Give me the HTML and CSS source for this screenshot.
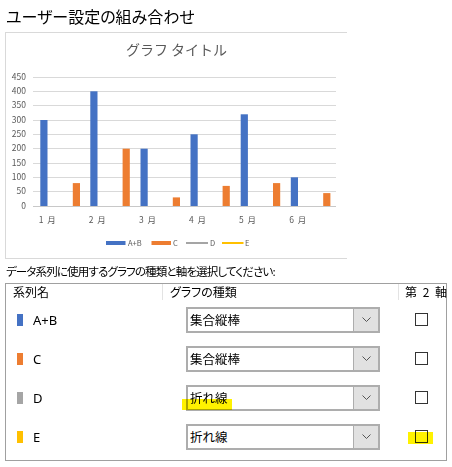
FILE: index.html
```html
<!DOCTYPE html>
<html lang="ja">

<head>
  <meta charset="UTF-8">
  <title>ユーザー設定の組み合わせ</title>
  <link rel="stylesheet" href="styles.css">
</head>

<body>

  <div class="page">
    <h1 class="page-title">ユーザー設定の組み合わせ</h1>

    <!-- Preview chart -->
    <div class="chart-box">
      <svg class="chart" width="341" height="225" viewBox="6 33 341 225">
        <text class="chart-title" x="176.5" y="55" text-anchor="middle">グラフ タイトル</text>

        <g class="grid">
          <line x1="33" x2="336" y1="77.5" y2="77.5"></line>
          <line x1="33" x2="336" y1="91.5" y2="91.5"></line>
          <line x1="33" x2="336" y1="105.5" y2="105.5"></line>
          <line x1="33" x2="336" y1="120.5" y2="120.5"></line>
          <line x1="33" x2="336" y1="134.5" y2="134.5"></line>
          <line x1="33" x2="336" y1="148.5" y2="148.5"></line>
          <line x1="33" x2="336" y1="163.5" y2="163.5"></line>
          <line x1="33" x2="336" y1="177.5" y2="177.5"></line>
          <line x1="33" x2="336" y1="191.5" y2="191.5"></line>
          <line class="axis" x1="33" x2="336" y1="206.5" y2="206.5"></line>
        </g>

        <g class="y-labels" text-anchor="end">
          <text x="26" y="80">450</text>
          <text x="26" y="94">400</text>
          <text x="26" y="108">350</text>
          <text x="26" y="123">300</text>
          <text x="26" y="137">250</text>
          <text x="26" y="151">200</text>
          <text x="26" y="166">150</text>
          <text x="26" y="180">100</text>
          <text x="26" y="194">50</text>
          <text x="26" y="209">0</text>
        </g>

        <!-- A+B -->
        <g class="bars-ab">
          <rect x="40.3" y="120" width="7.2" height="86"></rect>
          <rect x="90.3" y="91.3" width="7.2" height="114.7"></rect>
          <rect x="140.5" y="148.7" width="7.2" height="57.3"></rect>
          <rect x="190.5" y="134.3" width="7.2" height="71.7"></rect>
          <rect x="240.7" y="114.3" width="7.2" height="91.7"></rect>
          <rect x="290.8" y="177.3" width="7.2" height="28.7"></rect>
        </g>

        <!-- C -->
        <g class="bars-c">
          <rect x="72.8" y="183.1" width="7.2" height="22.9"></rect>
          <rect x="122.6" y="148.7" width="7.2" height="57.3"></rect>
          <rect x="172.8" y="197.4" width="7.2" height="8.6"></rect>
          <rect x="222.6" y="185.9" width="7.2" height="20.1"></rect>
          <rect x="273" y="183.1" width="7.2" height="22.9"></rect>
          <rect x="323.2" y="193.1" width="7.2" height="12.9"></rect>
        </g>

        <g class="x-labels" text-anchor="middle">
          <text x="47.8" y="223">1 月</text>
          <text x="97.8" y="223">2 月</text>
          <text x="148" y="223">3 月</text>
          <text x="198" y="223">4 月</text>
          <text x="248" y="223">5 月</text>
          <text x="298.2" y="223">6 月</text>
        </g>

        <g class="legend">
          <rect x="106" y="241" width="19.5" height="4" fill="#4472c4"></rect>
          <text x="128" y="246">A+B</text>
          <rect x="151.5" y="241" width="19.5" height="4" fill="#ed7d31"></rect>
          <text x="173" y="246">C</text>
          <line x1="186" x2="208" y1="243" y2="243" stroke="#a5a5a5" stroke-width="2"></line>
          <text x="210" y="246">D</text>
          <line x1="222" x2="243.5" y1="243" y2="243" stroke="#ffc000" stroke-width="2"></line>
          <text x="245" y="246">E</text>
        </g>
      </svg>
    </div>

    <p class="prompt">データ系列に使用するグラフの種類と軸を選択してください:</p>

    <!-- Series list -->
    <div class="series-table">
      <div class="series-head">
        <div class="head-cell">系列名</div>
        <div class="head-cell sep">グラフの種類</div>
        <div class="head-cell sep last">第 2 軸</div>
      </div>

      <div class="series-row">
        <div class="name-cell"><span class="swatch swatch-ab"></span>A+B</div>
        <div class="type-cell">
          <div class="combo">
            <span class="combo-text">集合縦棒</span>
            <span class="combo-btn"><svg width="9" height="5" viewBox="0 0 9 5"><path d="M0.5 0.5 L4.5 4.5 L8.5 0.5" /></svg></span>
          </div>
        </div>
        <div class="axis-cell"><span class="check"></span></div>
      </div>

      <div class="series-row">
        <div class="name-cell"><span class="swatch swatch-c"></span>C</div>
        <div class="type-cell">
          <div class="combo">
            <span class="combo-text">集合縦棒</span>
            <span class="combo-btn"><svg width="9" height="5" viewBox="0 0 9 5"><path d="M0.5 0.5 L4.5 4.5 L8.5 0.5" /></svg></span>
          </div>
        </div>
        <div class="axis-cell"><span class="check"></span></div>
      </div>

      <div class="series-row">
        <div class="name-cell"><span class="swatch swatch-d"></span>D</div>
        <div class="type-cell">
          <div class="combo">
            <span class="combo-text">折れ線</span>
            <span class="combo-btn"><svg width="9" height="5" viewBox="0 0 9 5"><path d="M0.5 0.5 L4.5 4.5 L8.5 0.5" /></svg></span>
            <span class="marker marker-type"></span>
          </div>
        </div>
        <div class="axis-cell"><span class="check"></span></div>
      </div>

      <div class="series-row">
        <div class="name-cell"><span class="swatch swatch-e"></span>E</div>
        <div class="type-cell">
          <div class="combo">
            <span class="combo-text">折れ線</span>
            <span class="combo-btn"><svg width="9" height="5" viewBox="0 0 9 5"><path d="M0.5 0.5 L4.5 4.5 L8.5 0.5" /></svg></span>
          </div>
        </div>
        <div class="axis-cell">
          <span class="check"><span class="marker marker-check"></span></span>
        </div>
      </div>
    </div>
  </div>

</body>

</html>
```

FILE: styles.css
```css
* {
  box-sizing: border-box;
}

body {
  margin: 0;
  background: #fff;
  color: #000;
  font-family: "Noto Sans", "Noto Sans CJK JP", sans-serif;
}

.page {
  width: 452px;
}

.page-title {
  margin: 0;
  padding-left: 6px;
  height: 32px;
  line-height: 32px;
  font-size: 16px;
  font-weight: normal;
  font-family: "Noto Sans CJK JP", sans-serif;
  font-feature-settings: "palt";
}

/* chart preview */

.chart-box {
  margin-left: 5px;
  width: 342px;
  height: 227px;
  border: 1px solid #d9d9d9;
  border-right: none;
}

.chart {
  display: block;
  font-family: "Noto Sans CJK JP", sans-serif;
}

.chart-title {
  font-size: 14px;
  fill: #595959;
}

.grid line {
  stroke: #d9d9d9;
  stroke-width: 1;
}

.grid .axis {
  stroke: #c8c8c8;
}

.y-labels text,
.x-labels text {
  font-size: 8.5px;
  fill: #595959;
}

.x-labels text {
  letter-spacing: 1px;
}

.bars-ab rect {
  fill: #4472c4;
}

.bars-c rect {
  fill: #ed7d31;
}

.legend text {
  font-size: 7.5px;
  fill: #595959;
}

.prompt {
  margin: 0;
  padding-left: 6px;
  height: 24px;
  line-height: 24px;
  font-size: 11.5px;
  letter-spacing: -0.85px;
  font-family: "Noto Sans CJK JP", sans-serif;
  font-feature-settings: "palt";
  white-space: nowrap;
}

/* series table */

.series-table {
  margin-left: 5px;
  width: 442px;
  border: 1px solid #a0a0a0;
  padding-bottom: 4px;
}

.series-head,
.series-row {
  display: grid;
  grid-template-columns: 156px 236px 48px;
}

.head-cell {
  height: 16px;
  line-height: 16px;
  padding-left: 7px;
  font-size: 12px;
  font-family: "Noto Sans CJK JP", sans-serif;
  font-feature-settings: "palt";
  white-space: nowrap;
}

.head-cell.sep {
  border-left: 1px solid #e3e3e3;
}

.head-cell.last {
  padding-left: 6px;
  letter-spacing: 1.5px;
}

.series-row {
  height: 39px;
  align-items: center;
}

.name-cell {
  display: flex;
  align-items: center;
  gap: 10px;
  padding-left: 11px;
  font-size: 13px;
}

.swatch {
  width: 6px;
  height: 12px;
}

.swatch-ab { background: #4472c4; }
.swatch-c { background: #ed7d31; }
.swatch-d { background: #a5a5a5; }
.swatch-e { background: #ffc000; }

.type-cell {
  padding-left: 24px;
}

.combo {
  position: relative;
  display: flex;
  width: 194px;
  height: 26px;
  border: 2px solid #adadad;
  background: #fff;
}

.combo-text {
  flex: 1;
  padding-left: 2px;
  line-height: 22px;
  font-size: 12.5px;
  font-family: "Noto Sans CJK JP", sans-serif;
}

.combo-btn {
  width: 25px;
  display: flex;
  align-items: center;
  justify-content: center;
  background: #e1e1e1;
  border-left: 1px solid #adadad;
}

.combo-btn path {
  fill: none;
  stroke: #555;
  stroke-width: 1;
}

.axis-cell {
  padding-left: 17px;
}

.check {
  position: relative;
  display: block;
  width: 13px;
  height: 13px;
  border: 1px solid #333;
  background: #fff;
}

/* highlighter strokes drawn over the form */

.marker {
  position: absolute;
  background: #fff200;
  mix-blend-mode: multiply;
}

.marker-type {
  left: -6px;
  top: 12px;
  width: 50px;
  height: 11px;
}

.marker-check {
  left: -8px;
  top: 1px;
  width: 25px;
  height: 12px;
}
```
